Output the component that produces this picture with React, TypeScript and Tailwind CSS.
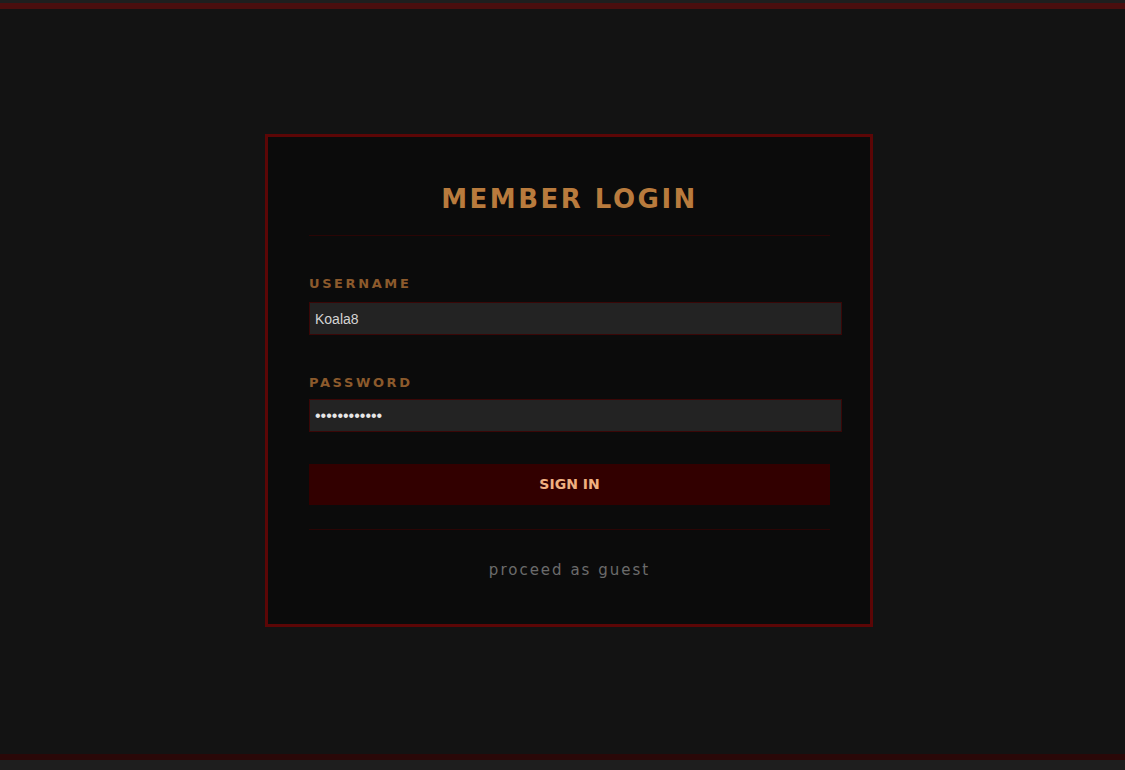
import { useState, type FC } from 'react';

const App: FC = () => {
  const [username, setUsername] = useState('Koala8');
  const [password, setPassword] = useState('************');

  return (
    <div className="min-h-[770px] h-[770px] flex flex-col bg-[#131313] font-['DejaVu_Sans',sans-serif]">
      <div className="h-[3px] bg-[#1e1e1e]" />
      <div className="h-[6px] bg-[#4a0e0e]" />

      <main className="flex-1 flex justify-center pl-[13px] pt-[125px]">
        <section className="w-[608px] h-[493px] border-[3px] border-[#5c0606] bg-[#0b0b0b] pl-[41px] pr-[40px] pt-[44px]">
          <h1 className="text-center text-[26px] leading-[36px] font-bold tracking-[2.5px] text-[#b97b3d]">
            MEMBER LOGIN
          </h1>
          <div className="mt-[18px] h-px bg-[#2a0505]" />

          <form className="mt-[40px]" onSubmit={e => e.preventDefault()}>
            <label className="block text-[13px] leading-[16px] font-semibold tracking-[2.6px] text-[#8c5a2c]">
              USERNAME
            </label>
            <input
              value={username}
              onChange={e => setUsername(e.target.value)}
              className="mt-[10px] box-content block w-full h-[31px] px-[5px] border border-[#3a0707] bg-[#232323] text-[#d4d4d4] text-[14px] font-['Liberation_Sans',sans-serif] outline-none"
            />

            <label className="mt-[40px] block text-[13px] leading-[16px] font-semibold tracking-[2.6px] text-[#8c5a2c]">
              PASSWORD
            </label>
            <input
              type="password"
              value={password}
              onChange={e => setPassword(e.target.value)}
              className="mt-[8px] box-content block w-full h-[31px] px-[5px] border border-[#3a0707] bg-[#232323] text-[#e6e6e6] text-[16px] font-['Liberation_Sans',sans-serif] outline-none"
            />

            <button
              type="submit"
              className="mt-[32px] block w-full h-[41px] bg-[#320000] text-[#f0b080] text-[14px] leading-[41px] font-bold"
            >
              SIGN IN
            </button>
          </form>

          <div className="mt-[24px] h-px bg-[#2a0505]" />

          <p className="mt-[29px] text-center text-[15px] tracking-[2px] text-[#6b6b6b]">
            proceed as guest
          </p>
        </section>
      </main>

      <div className="h-[6px] bg-[#2a0808]" />
      <div className="h-[10px] bg-[#1e1e1e]" />
    </div>
  );
};

export default App;
